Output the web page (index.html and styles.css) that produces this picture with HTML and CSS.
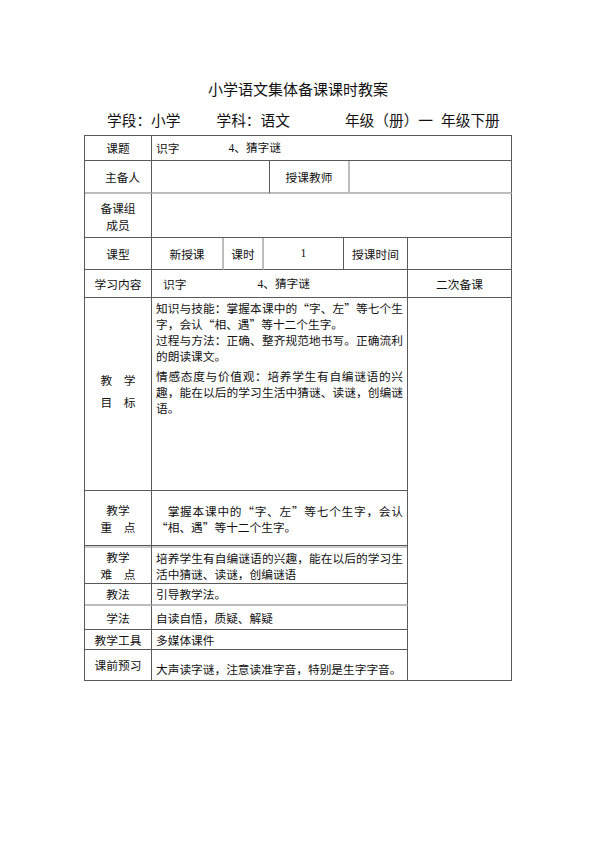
FILE: index.html
```html
<!DOCTYPE html>
<html lang="zh-CN">
<head>
<meta charset="utf-8">
<title>小学语文集体备课课时教案</title>
<link rel="stylesheet" href="styles.css">
</head>
<body>
<div class="sheet">
  <h1 class="title">小学语文集体备课课时教案</h1>
  <div class="meta">
    <span class="meta-stage">学段：小学</span>
    <span class="meta-subject">学科：语文</span>
    <span class="meta-grade">年级（册）一<span class="meta-gap">年级下册</span></span>
  </div>

  <div class="tbl">
    <div class="row row-topic">
      <div class="cell">课题</div>
      <div class="cell text"><span>识字</span><span class="topic-name"><span class="num">4</span>、猜字谜</span></div>
    </div>
    <div class="row row-owner">
      <div class="cell owner-label">主备人</div>
      <div class="cell"></div>
      <div class="cell soft-right">授课教师</div>
      <div class="cell"></div>
    </div>
    <div class="row row-members">
      <div class="cell stack">备课组<br>成员</div>
      <div class="cell"></div>
    </div>
    <div class="row row-type">
      <div class="cell">课型</div>
      <div class="cell soft-right">新授课</div>
      <div class="cell soft-right">课时</div>
      <div class="cell"><span class="num">1</span></div>
      <div class="cell">授课时间</div>
      <div class="cell"></div>
    </div>

    <div class="lower">
      <div class="cell">学习内容</div>
      <div class="cell text content-topic"><span>识字</span><span class="content-name"><span class="num">4</span>、猜字谜</span></div>
      <div class="cell">二次备课</div>

      <div class="cell goal-label">教　学<br>目　标</div>
      <div class="cell para goals">
        <p>知识与技能：掌握本课中的“字、左”等七个生字，会认“相、遇”等十二个生字。</p>
        <p>过程与方法：正确、整齐规范地书写。正确流利的朗读课文。</p>
        <p class="goal-feel">情感态度与价值观：培养学生有自编谜语的兴趣，能在以后的学习生活中猜谜、读谜，创编谜语。</p>
      </div>
      <div class="cell side-blank"></div>

      <div class="cell stack">教学<br>重　点</div>
      <div class="cell para key"><p class="indent">掌握本课中的“字、左”等七个生字，会认“相、遇”等十二个生字。</p></div>

      <div class="cell stack hard-top">教学<br>难　点</div>
      <div class="cell para hard-top"><p>培养学生有自编谜语的兴趣,能在以后的学习生活中猜谜、读谜，创编谜语</p></div>

      <div class="cell soft-bottom">教法</div>
      <div class="cell text soft-bottom">引导教学法。</div>

      <div class="cell">学法</div>
      <div class="cell text">自读自悟，质疑、解疑</div>

      <div class="cell">教学工具</div>
      <div class="cell text">多媒体课件</div>

      <div class="cell">课前预习</div>
      <div class="cell text preview">大声读字谜，注意读准字音，特别是生字字音。</div>
    </div>
  </div>
</div>
</body>
</html>
```

FILE: styles.css
```css
html, body {
  margin: 0;
  padding: 0;
  background: #ffffff;
}

body {
  font-family: "Noto Sans CJK SC", sans-serif;
  color: #111111;
}

.sheet {
  width: 428px;
  margin-left: 84px;
  padding-top: 79px;
}

.title {
  margin: 0 0 11px;
  font-size: 15px;
  font-weight: 400;
  line-height: 20px;
  text-align: center;
}

.meta {
  display: flex;
  padding-left: 23px;
  margin-bottom: 5px;
  font-size: 14.7px;
  line-height: 20px;
  white-space: nowrap;
}

.meta-subject {
  margin-left: 36px;
}

.meta-grade {
  margin-left: 55px;
}

.meta-gap {
  margin-left: 8px;
}

.num {
  font-family: "Liberation Serif", serif;
}

.tbl {
  border-top: 1px solid #5a5a5a;
  border-left: 1px solid #5a5a5a;
  font-size: 11.7px;
  line-height: 16px;
  font-feature-settings: "fwid";
}

.row {
  display: grid;
}

.row-topic {
  grid-template-columns: 67px 360px;
  height: 25px;
}

.row-owner {
  grid-template-columns: 67px 118px 80px 162px;
  height: 33px;
}

.row-owner .cell {
  border-bottom: 2px solid #bdbdbd;
}

.row-members {
  grid-template-columns: 67px 360px;
  height: 44px;
}

.row-type {
  grid-template-columns: 67px 72px 40px 80px 64px 104px;
  height: 32px;
}

.cell {
  box-sizing: border-box;
  display: flex;
  align-items: center;
  justify-content: center;
  text-align: center;
  border-right: 1px solid #5a5a5a;
  border-bottom: 1px solid #5a5a5a;
  min-width: 0;
}

.soft-right {
  border-right: 2px solid #bdbdbd;
}

.soft-bottom {
  border-bottom: 2px solid #bdbdbd;
}

.hard-top {
  box-shadow: inset 0 2px 0 #cccccc;
}

.text {
  justify-content: flex-start;
  text-align: left;
  padding: 0 4px;
}

.topic-name {
  margin-left: 49px;
}

.content-topic {
  padding-left: 11px;
}

.content-name {
  margin-left: 71px;
}

.owner-label {
  padding-left: 9px;
}

.stack {
  line-height: 17px;
}

.lower {
  display: grid;
  grid-template-columns: 67px 256px 104px;
  grid-template-rows: 28px 193px 55px 38px 22px 24px 20px 31px;
}

.side-blank {
  grid-column: 3;
  grid-row: 2 / 9;
}

.goal-label {
  line-height: 22px;
  padding-bottom: 6px;
}

.para {
  display: block;
  padding: 0 4px;
  text-align: justify;
}

.para p {
  margin: 0;
}

.goals {
  padding-top: 2px;
}

.goal-feel {
  padding-top: 4px;
}

.key {
  display: flex;
  align-items: center;
  padding-top: 2px;
}

.key p,
.hard-top p {
  width: 100%;
}

.hard-top.para {
  display: flex;
  align-items: center;
  padding-top: 2px;
}

.indent {
  text-indent: 1em;
}

.preview {
  align-items: flex-start;
  padding-top: 11px;
}
```
